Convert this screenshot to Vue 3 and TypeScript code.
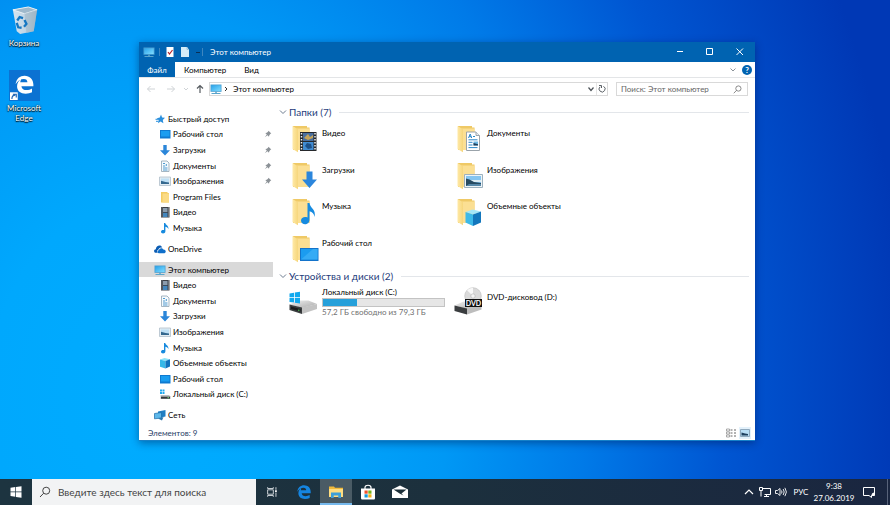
<script setup lang="ts">
import { ref } from 'vue'

interface NavItem {
  label: string
  icon: string
  child?: boolean
  pinned?: boolean
  selected?: boolean
  gapBefore?: boolean
}

interface Tile {
  label: string
  icon: string
}

const navItems: NavItem[] = [
  { label: 'Быстрый доступ', icon: 'star' },
  { label: 'Рабочий стол', icon: 'desktop', child: true, pinned: true },
  { label: 'Загрузки', icon: 'download', child: true, pinned: true },
  { label: 'Документы', icon: 'document', child: true, pinned: true },
  { label: 'Изображения', icon: 'picture', child: true, pinned: true },
  { label: 'Program Files', icon: 'folder', child: true },
  { label: 'Видео', icon: 'video', child: true },
  { label: 'Музыка', icon: 'music', child: true },
  { label: 'OneDrive', icon: 'cloud', gapBefore: true },
  { label: 'Этот компьютер', icon: 'computer', selected: true, gapBefore: true },
  { label: 'Видео', icon: 'video', child: true },
  { label: 'Документы', icon: 'document', child: true },
  { label: 'Загрузки', icon: 'download', child: true },
  { label: 'Изображения', icon: 'picture', child: true },
  { label: 'Музыка', icon: 'music', child: true },
  { label: 'Объемные объекты', icon: 'cube', child: true },
  { label: 'Рабочий стол', icon: 'desktop', child: true },
  { label: 'Локальный диск (C:)', icon: 'disk', child: true },
  { label: 'Сеть', icon: 'network', gapBefore: true },
]

const folders: Tile[] = [
  { label: 'Видео', icon: 'big-video' },
  { label: 'Документы', icon: 'big-document' },
  { label: 'Загрузки', icon: 'big-download' },
  { label: 'Изображения', icon: 'big-picture' },
  { label: 'Музыка', icon: 'big-music' },
  { label: 'Объемные объекты', icon: 'big-cube' },
  { label: 'Рабочий стол', icon: 'big-desktop' },
]

const totalGb = 79.3
const freeGb = 57.2
const usedPercent = ((totalGb - freeGb) / totalGb) * 100

const query = ref('')
const taskQuery = ref('')
</script>

<template>
  <div class="screen">
    <svg class="sprite" aria-hidden="true">
      <defs>
        <linearGradient id="g-screen" x1="0" y1="0" x2="1" y2="1">
          <stop offset="0" stop-color="#2aa3ea" />
          <stop offset="1" stop-color="#7fdcff" />
        </linearGradient>
        <linearGradient id="g-folder" x1="0" y1="0" x2="1" y2="0">
          <stop offset="0" stop-color="#ffe9a6" />
          <stop offset="1" stop-color="#f6d67c" />
        </linearGradient>
        <linearGradient id="g-bin" x1="0" y1="0" x2="1" y2="0">
          <stop offset="0" stop-color="#d5e3ee" />
          <stop offset="0.5" stop-color="#c1d6e6" />
          <stop offset="1" stop-color="#8fa9bd" />
        </linearGradient>
        <linearGradient id="g-disk" x1="0" y1="0" x2="1" y2="1">
          <stop offset="0" stop-color="#f0f0f0" />
          <stop offset="1" stop-color="#a9a9a9" />
        </linearGradient>
      </defs>

      <symbol id="star" viewBox="0 0 12 12">
        <path d="M7 1.500 8.100 4.500 11 4.800 8.800 6.900 9.400 10.200 6.600 8.500 4 10.200 4.700 7.100 2.800 5.200 5.800 4.500Z" fill="#2a8fdd" />
        <path d="M1.500 6.300h3M2 8.300h2.500" stroke="#2a8fdd" />
      </symbol>
      <symbol id="desktop" viewBox="0 0 12 12">
        <path d="M1 2h10.500v8.500H1z" fill="#0f7ad0" />
        <path d="M2 3h8.500v5.500H2z" fill="#1a9df0" />
      </symbol>
      <symbol id="download" viewBox="0 0 12 12">
        <path d="M4.300 1h3.400v5.200H11L6 11.500 1 6.200h3.300z" fill="#2b86d9" />
      </symbol>
      <symbol id="document" viewBox="0 0 12 12">
        <path d="M2.500 1h5.500L10 3v8.500H2.500z" fill="#f6fafd" stroke="#8fa3b3" stroke-width=".8" />
        <path d="M4 3.500h2M7.300 4v2M4 6h2.200M4 8h4.500M4 10h4.500" stroke="#3a8fca" stroke-width=".9" />
      </symbol>
      <symbol id="picture" viewBox="0 0 12 12">
        <path d="M.5 2h11v8.500H.5z" fill="#e4edf3" stroke="#a8b8c4" stroke-width=".7" />
        <path d="M2 3.500h8V9H2z" fill="#bfe0f5" />
        <path d="M2 5.800 6.500 7 10 7.500V9H2z" fill="#35688e" />
      </symbol>
      <symbol id="folder" viewBox="0 0 12 12">
        <path d="M2 1h6.500v1H10v9.500H2z" fill="#f3cc62" />
        <path d="M3.500 2.500H10v9H3.500z" fill="#fbdb85" />
      </symbol>
      <symbol id="video" viewBox="0 0 12 12">
        <path d="M2 1h8.500v10.500H2z" fill="#3b3f46" />
        <path d="M4 2h4.500v4H4z" fill="#8b9cad" />
        <path d="M4 6.800h4.500V11H4z" fill="#4386bd" />
        <path d="M3 1.500v10M9.500 1.500v10" stroke="#c9ced4" stroke-width=".7" stroke-dasharray="1 1" />
      </symbol>
      <symbol id="music" viewBox="0 0 12 12">
        <path d="M5 1h1.300c.2 2 3.700 2.500 3 6.200-.5-1.700-1.500-2-2.900-2.400v4.500c0 2.800-4.400 2.900-4.400.5 0-1.700 1.700-2.200 3-1.700z" fill="#178ade" />
      </symbol>
      <symbol id="cloud" viewBox="0 0 12 12">
        <path d="M1 9.800C-.6 8.600.1 6.300 1.800 6.300 1.800 2.500 7 .8 8.200 4.500 5.800 4 4.600 5.200 4.400 6.700 2.800 7 2.800 9 3.800 9.800z" fill="#0b5cb3" />
        <path d="M4.800 10.200C3 9.700 3.200 7.300 5 7.300c.2-2.500 3.500-2.800 4.300-.7 2.600-.3 3.300 3 1.200 3.600z" fill="#0f6fca" />
      </symbol>
      <symbol id="computer" viewBox="0 0 12 12">
        <path d="M.5 1.500h11v7.300H.5z" fill="#4a9fd0" />
        <path d="M1.300 2.300h9.400V8H1.300z" fill="url(#g-screen)" />
        <path d="M5 8.800h2v1H5zM1.500 10h9v1h-9z" fill="#5aa5cc" />
      </symbol>
      <symbol id="cube" viewBox="0 0 12 12">
        <path d="M1 2.500 5.500 1 11 2.300 6.500 4z" fill="#8de3f8" />
        <path d="M1 2.500 6.500 4v7.500L1 9.800z" fill="#35b8e8" />
        <path d="M6.500 4 11 2.300v7.200l-4.500 2z" fill="#1173bd" />
      </symbol>
      <symbol id="disk" viewBox="0 0 12 12">
        <path d="M1 1.500h2v2H1zM3.500 1.500h2v2h-2zM1 4h2v2H1zM3.500 4h2v2h-2z" fill="#23aaf0" />
        <path d="M1.500 7h8.500l1.500 1.500v2.500h-10z" fill="#b9bdc0" />
        <path d="M2 8.700h9v2H2z" fill="#33383b" />
        <path d="M8.500 9.700h1.500" stroke="#7be07b" />
      </symbol>
      <symbol id="network" viewBox="0 0 12 12">
        <path d="M4 2.500 11.500 1v6.500L4 9z" fill="#1f7fc4" />
        <path d="M.5 4.500 7.500 3.500v5.500L.5 9.800z" fill="#5db8ea" stroke="#1a6aa8" stroke-width=".7" />
        <path d="M4 9.500 9.500 8 8 11.500z" fill="#2a79b0" />
      </symbol>
      <symbol id="pin" viewBox="0 0 8 8">
        <path d="M4.500.7 7.300 3.500 6.500 3.800 5.300 5.200 5 6.700 3.500 5.200.8 7.300 2.800 4.500 1.300 3l1.600-.3 1.300-1.200z" fill="#8b9196" />
      </symbol>

      <symbol id="base" viewBox="0 0 28 28">
        <path d="M2 1h14v1.500h2.500V25H2z" fill="#efc966" />
        <path d="M5.500 3.500h13V25h-13z" fill="#fbdf93" />
        <path d="M1.500 1 7 4.200v23L1.500 24z" fill="url(#g-folder)" />
      </symbol>
      <symbol id="big-video" viewBox="0 0 28 28">
        <use href="#base" width="28" height="28" />
        <path d="M9 7h16.500v19H9z" fill="#26282b" />
        <path d="M12 8h10.500v8H12z" fill="#496f9f" />
        <path d="M12 17h10.500v8H12z" fill="#408bd1" />
        <path d="M13 13l4-4 2 3 3-2v3l-5 2z" fill="#c4a35a" />
        <path d="M14 21l2-3 4 1 1 4-4 1z" fill="#1d5087" />
        <path d="M10.500 8v18M24 8v18" stroke="#f1f1f1" stroke-width="1.500" stroke-dasharray="1.500 1.500" />
      </symbol>
      <symbol id="big-document" viewBox="0 0 28 28">
        <use href="#base" width="28" height="28" />
        <path d="M10.500 7H20l3.500 3.500V25.500h-13z" fill="#fff" stroke="#9aa3aa" />
        <path d="M20 7v3.500h3.500" fill="#e6edf2" stroke="#9aa3aa" />
        <path d="m12.500 13 1.700-4 1.500 4m-2.500-1.300h2M17 11.500h2M12.500 14.800h9M12.500 17.300h4M12.500 20h4M12.500 22.600h9" fill="none" stroke="#2b87c8" />
        <path d="M17.500 16.500H22v4h-4.500z" fill="#6eb8e4" />
        <path d="m17.500 18 4.500 1.200v1.300h-4.500z" fill="#203e59" />
      </symbol>
      <symbol id="big-download" viewBox="0 0 28 28">
        <use href="#base" width="28" height="28" />
        <path d="M15.500 9.500h6v8H26L18.500 26 11 17.500h4.500z" fill="#2b86dc" />
      </symbol>
      <symbol id="big-picture" viewBox="0 0 28 28">
        <use href="#base" width="28" height="28" />
        <path d="M8.500 12.500h18v13h-18z" fill="#eef4f7" stroke="#9db1be" />
        <path d="M10 14h15v10H10z" fill="#85c5f0" />
        <path d="M10 18h15v2H10z" fill="#dcecf3" />
        <path d="m10 16.500 3.500 1L18 20l7 1v3H10z" fill="#274b62" />
        <path d="M13 22h12v2H10z" fill="#5687a8" />
      </symbol>
      <symbol id="big-music" viewBox="0 0 28 28">
        <use href="#base" width="28" height="28" />
        <path d="M16.500 5h2c.4 5 7 6.500 5 14-.5-3.500-2-5-5-5.800v8.500c0 6-8.500 5.600-8.500 1 0-3.200 3.500-4.500 6.500-3.200z" fill="#168be0" />
      </symbol>
      <symbol id="big-cube" viewBox="0 0 28 28">
        <use href="#base" width="28" height="28" />
        <path d="m9.500 14 7-2.500 8.500 2-8 3z" fill="#a5e6f7" />
        <path d="m9.500 14 7.500 2.500V28l-7.500-3.500z" fill="#3db9e8" />
        <path d="M17 16.500 25 13.500V24.500L17 28z" fill="#1377bd" />
      </symbol>
      <symbol id="big-desktop" viewBox="0 0 28 28">
        <use href="#base" width="28" height="28" />
        <path d="M9 13h18.500v13H9z" fill="#1373ca" />
        <path d="M10 14h16.500v10.500H10z" fill="#1b9cf0" />
        <path d="M10 24.500 22 14h4.500v10.500z" fill="#35abf5" />
      </symbol>

      <symbol id="edge" viewBox="0 0 24 24">
        <path d="M1 11.500C2 4.500 6.500 1 12 1c6.500 0 11 4.500 11 11v2H8.200c.3 3.200 3 4.800 6.300 4.800 2.500 0 4.800-.7 6.800-1.900v4.800C19.200 22.800 16.500 23.300 13.500 23.300 7 23.300 2.800 19.700 2.800 14c0-3.800 2-7 5.500-8.800-.9 1.100-1.400 2.500-1.600 4.100h8.900C15.600 6.600 14 5.200 11.200 5.200 7 5.200 3.500 7.500 1 11.500z" fill="currentColor" />
      </symbol>
      <symbol id="magnifier" viewBox="0 0 12 12">
        <circle cx="7.200" cy="4.700" r="3.500" fill="none" stroke="currentColor" />
        <path d="M4.700 7.200 1 11" fill="none" stroke="currentColor" />
      </symbol>
    </svg>

    <main class="desktop">
      <nav class="shortcuts" aria-label="Рабочий стол">
        <a class="shortcut" href="#bin">
          <svg class="shortcut-icon" viewBox="0 0 32 32">
            <path d="m4 5 16-3 9 3-3.500 22-14 3L8 27z" fill="url(#g-bin)" />
            <path d="m4 5 16-3 9 3-13 4z" fill="#9fb9cc" stroke="#e9f1f6" />
            <path d="m16 9 13-4-3.500 22-7.500 2z" fill="#a6bccb" opacity=".7" />
            <g fill="none" stroke="#1577c2" stroke-width="2.400">
              <path d="m8.500 16 2.500-3.500 3.500 1M16 15.500l2 4-2.500 3M13 23.500 9.500 23 8 18.500" />
            </g>
          </svg>
          <span>Корзина</span>
        </a>
        <a class="shortcut" href="#edge-browser">
          <svg class="shortcut-icon" viewBox="0 0 32 32">
            <path d="M0 0h32v32H0z" fill="#0b72d2" />
            <use href="#edge" x="6" y="5" width="20" height="20" color="#fff" />
            <path d="M1 23h8v8H1z" fill="#fff" />
            <path d="M3 30c0-3 1-4 3.500-4M4 25h3.500v3.500" fill="none" stroke="#2266b5" stroke-width="1.200" />
          </svg>
          <span>Microsoft Edge</span>
        </a>
      </nav>

      <section class="window" aria-label="Этот компьютер">
        <header class="titlebar">
          <svg class="icon title-icon"><use href="#computer" /></svg>
          <span class="divider"></span>
          <button class="quick" aria-label="Свойства">
            <svg viewBox="0 0 12 12"><path d="M2.500 1h7v10h-7z" fill="#fff" /><path d="m4 6 1.500 2L8.500 4" fill="none" stroke="#b4232b" stroke-width="1.200" /></svg>
          </button>
          <button class="quick" aria-label="Новая папка">
            <svg viewBox="0 0 12 12"><path d="M2 1h6l1.500 2H10v8H2z" fill="#d5ecf8" /><path d="M8 1v2.500h2" fill="none" stroke="#8ab6d3" stroke-width=".7" /></svg>
          </button>
          <button class="quick small" aria-label="Настройка панели">
            <svg viewBox="0 0 8 12"><path d="M2 6.500h4" stroke="#0b2f55" /></svg>
          </button>
          <span class="divider"></span>
          <h1 class="title">Этот компьютер</h1>
          <div class="caption-buttons">
            <button aria-label="Свернуть"><svg viewBox="0 0 12 12"><path d="M3 5.500h6" stroke="#fff" /></svg></button>
            <button aria-label="Развернуть"><svg viewBox="0 0 12 12"><path d="M2.500 2.500h6v6h-6z" fill="none" stroke="#fff" /></svg></button>
            <button aria-label="Закрыть"><svg viewBox="0 0 12 12"><path d="m2.500 2.500 6.500 6.500M9 2.500 2.500 9" stroke="#fff" /></svg></button>
          </div>
        </header>

        <div class="ribbon">
          <button class="tab file">Файл</button>
          <button class="tab">Компьютер</button>
          <button class="tab">Вид</button>
          <button class="ribbon-toggle" aria-label="Развернуть ленту">
            <svg viewBox="0 0 8 8"><path d="m1.500 2.500 2.500 2.500 2.500-2.500" fill="none" stroke="#8b9399" /></svg>
          </button>
          <button class="help" aria-label="Справка">?</button>
        </div>

        <div class="navbar">
          <div class="arrows">
            <button aria-label="Назад"><svg viewBox="0 0 10 10"><path d="M9 5H1.500M4.500 2l-3 3 3 3" fill="none" stroke="#cfd3d6" /></svg></button>
            <button aria-label="Вперёд"><svg viewBox="0 0 10 10"><path d="M1 5h7.500M5.500 2l3 3-3 3" fill="none" stroke="#cfd3d6" /></svg></button>
            <button class="narrow" aria-label="Журнал"><svg viewBox="0 0 10 10"><path d="m3 4 2 2 2-2" fill="none" stroke="#cfd3d6" /></svg></button>
            <button class="up" aria-label="Вверх"><svg viewBox="0 0 10 10"><path d="M5 9V1.500M2 4.500l3-3 3 3" fill="none" stroke="#565b60" stroke-width="1.200" /></svg></button>
          </div>
          <div class="address">
            <svg class="icon"><use href="#computer" /></svg>
            <svg class="crumb-arrow" viewBox="0 0 8 8"><path d="m3 2 2 2-2 2" fill="none" stroke="#333" /></svg>
            <a class="crumb" href="#computer">Этот компьютер</a>
            <button aria-label="Список адресов"><svg viewBox="0 0 10 10"><path d="m2.500 3.500 2.500 3 2.500-3" fill="none" stroke="#4c5257" stroke-width="1.200" /></svg></button>
            <button class="refresh" aria-label="Обновить"><svg viewBox="0 0 10 10"><path d="M6.500 2.300A3 3 0 1 1 3 2.800M2 1.500h2.500V4" fill="none" stroke="#5b6166" /></svg></button>
          </div>
          <label class="search">
            <input v-model="query" type="search" aria-label="Поиск" placeholder="Поиск: Этот компьютер" />
            <svg viewBox="0 0 12 12"><use href="#magnifier" /></svg>
          </label>
        </div>

        <div class="body">
          <nav class="sidebar" aria-label="Навигация">
            <template v-for="(item, i) in navItems" :key="i">
              <span v-if="item.gapBefore" class="nav-gap"></span>
              <a class="nav-item" :class="{ child: item.child, selected: item.selected }" href="#item">
                <svg class="icon"><use :href="'#' + item.icon" /></svg>
                <span>{{ item.label }}</span>
                <svg v-if="item.pinned" class="pin"><use href="#pin" /></svg>
              </a>
            </template>
          </nav>

          <div class="content">
            <h2 class="group">
              <svg viewBox="0 0 8 8"><path d="m1 2.500 3 3 3-3" fill="none" stroke="#6d7c90" /></svg>
              <span>Папки (7)</span>
            </h2>
            <div class="tiles folders">
              <a v-for="folder in folders" :key="folder.label" class="tile" href="#folder">
                <svg class="tile-icon"><use :href="'#' + folder.icon" /></svg>
                <span class="tile-name">{{ folder.label }}</span>
              </a>
            </div>
            <h2 class="group">
              <svg viewBox="0 0 8 8"><path d="m1 2.500 3 3 3-3" fill="none" stroke="#6d7c90" /></svg>
              <span>Устройства и диски (2)</span>
            </h2>
            <div class="tiles drives">
              <a class="tile drive" href="#disk-c">
                <svg class="tile-icon" viewBox="0 0 28 28">
                  <path d="m.5 17.500 9-4h10l8.500 3.500-15 4z" fill="url(#g-disk)" />
                  <path d="m.5 17.500 12.500 3v6.500L.5 23z" fill="#3a3d3f" />
                  <path d="m13 20.500 15-3.500v5L13 27z" fill="#c3c3c3" />
                  <path d="m2 19.500 9.500 2.500v2.500L2 22z" fill="#1b1c1d" />
                  <path d="M9 23.200h1.500" stroke="#5bd765" />
                  <path d="m.5 6.500 4.500-.8v4.600H.5zM5.800 5.600 11 4.800v5.500H5.800zM.5 11H5v4.600l-4.500-.7zM5.800 11H11v5.500l-5.200-.8z" fill="#11a9ee" />
                </svg>
                <span class="drive-info">
                  <span>Локальный диск (C:)</span>
                  <span class="meter"><span class="meter-fill" :style="{ width: usedPercent + '%' }"></span></span>
                  <span class="free">57,2 ГБ свободно из 79,3 ГБ</span>
                </span>
              </a>
              <a class="tile drive" href="#disk-d">
                <svg class="tile-icon" viewBox="0 0 28 28">
                  <path d="m.5 18.500 9-4h10l8 3.500-14.500 4z" fill="url(#g-disk)" />
                  <path d="m.5 18.500 12.500 3v6L.5 24z" fill="#3a3d3f" />
                  <path d="m13 21.500 14.500-3.500v4.500L13 27.500z" fill="#bdbdbd" />
                  <circle cx="19" cy="9" r="8.300" fill="#dadada" stroke="#bcbcbc" stroke-width=".6" />
                  <path d="M19 9 13 3.200A8.300 8.300 0 0 1 19 .7z" fill="#f8f8f8" />
                  <circle cx="19" cy="9" r="2.200" fill="#f4f4f4" stroke="#b0b0b0" stroke-width=".6" />
                  <path d="M11 12h17v8H11z" fill="#101010" />
                  <text class="disc-label" x="19.500" y="18.500" text-anchor="middle">DVD</text>
                </svg>
                <span class="tile-name">DVD-дисковод (D:)</span>
              </a>
            </div>
          </div>
        </div>

        <footer class="statusbar">
          <span>Элементов: 9</span>
          <div class="view-buttons">
            <button aria-label="Таблица"><svg viewBox="0 0 12 12"><path d="M1.500 2h3v2h-3zM1.500 5h3v2h-3zM1.500 8h3v2h-3z" fill="none" stroke="#888" stroke-width=".7" /><path d="M5.500 3h2M5.500 6h2M5.500 9h2M9 3h2M9 6h2M9 9h2" stroke="#666" /></svg></button>
            <button class="active" aria-label="Крупные значки"><svg viewBox="0 0 12 12"><path d="M1.500 2.500h9v7h-9z" fill="#b9def5" stroke="#8fa9bd" /><path d="m2.500 5.500 3.500 1 3 .5v1.500H2.500z" fill="#1e3f5d" /></svg></button>
          </div>
        </footer>
      </section>
    </main>

    <footer class="taskbar">
      <button class="task" aria-label="Пуск">
        <svg viewBox="0 0 16 16"><path d="m2.500 3.800 4.800-.7v4.500H2.500zM8 3l5.500-.8v5.400H8zM2.500 8.300h4.800v4.500l-4.800-.7zM8 8.300h5.500v5.500L8 13z" fill="#fff" /></svg>
      </button>
      <label class="task-search">
        <svg viewBox="0 0 12 12"><use href="#magnifier" /></svg>
        <input v-model="taskQuery" type="search" aria-label="Поиск в Windows" placeholder="Введите здесь текст для поиска" />
      </label>
      <button class="task" aria-label="Представление задач">
        <svg class="view-icon" viewBox="0 0 16 16"><path d="M3 5.500h6.500v5H3zM3 2.500v1.500h6.500V2.500M3 13.500V12h6.500v1.500M12.500 2.500v3M12.500 8.500v5" fill="none" stroke="#dfe4e7" /><path d="M11.500 6h2v2h-2z" fill="#fff" /></svg>
      </button>
      <button class="task edge-task" aria-label="Microsoft Edge">
        <svg viewBox="0 0 24 24"><use href="#edge" x="1" y="1" width="22" height="22" /></svg>
      </button>
      <button class="task running" aria-label="Проводник">
        <svg viewBox="0 0 16 16"><path d="M1 2.500h5l1 1.300h8V13H1z" fill="#f0b93b" /><path d="M1 5h14v8H1z" fill="#ffdd80" /><path d="M3 8.500h10V14h-2.700v-2.500H5.700V14H3z" fill="#3c9fd8" /></svg>
      </button>
      <button class="task" aria-label="Microsoft Store">
        <svg viewBox="0 0 16 16"><path d="M5 5V3.500c0-3 6-3 6 0V5" fill="none" stroke="#fff" stroke-width="1.200" /><path d="M1 4.500h14V14c0 1-.5 1.500-1.500 1.500h-11C1.500 15.500 1 15 1 14z" fill="#fff" /><path d="M4.500 6.500h3.200v3.200H4.500z" fill="#f0522b" /><path d="M8.300 6.500h3.200v3.200H8.300z" fill="#77b31b" /><path d="M4.500 10.300h3.200v3.200H4.500z" fill="#1399dd" /><path d="M8.300 10.300h3.200v3.200H8.300z" fill="#f3b01b" /></svg>
      </button>
      <button class="task" aria-label="Почта">
        <svg viewBox="0 0 16 16"><path d="M0 5.500 8 1.500l8 4V14H0z" fill="#fff" /><path d="M1.500 5.500h13L9.500 9.500l2 2L8 9.800z" fill="#1d303a" /></svg>
      </button>

      <div class="tray">
        <button class="tray-button" aria-label="Скрытые значки"><svg viewBox="0 0 12 12"><path d="m2 8 4-4 4 4" fill="none" stroke="#fff" stroke-width="1.200" /></svg></button>
        <button class="tray-button" aria-label="Сеть"><svg viewBox="0 0 12 12"><path d="M3.500 2.500h8v6h-6M7.500 8.500v2M5 10.500h5M.5 1.500h3v3h-3zM2 4.500v6" fill="none" stroke="#fff" /></svg></button>
        <button class="tray-button" aria-label="Громкость"><svg viewBox="0 0 12 12"><path d="M.5 4.500h2l2.500-2v7l-2.500-2h-2zM6.500 4.500q1 1.500 0 3M8.200 3q2 3 0 6M9.900 1.800q3 4.200 0 8.400" fill="none" stroke="#fff" stroke-width=".9" /></svg></button>
        <button class="language">РУС</button>
        <button class="clock"><span>9:38</span><span>27.06.2019</span></button>
        <button class="notify" aria-label="Уведомления"><svg viewBox="0 0 12 12"><path d="M.5 1.500h11v8h-3v2l-2.500-2H.5z" fill="none" stroke="#fff" /><path d="M8.500 9.500q0-3 3-3v3z" fill="#fff" /></svg></button>
        <button class="show-desktop" aria-label="Свернуть все окна"></button>
      </div>
    </footer>
  </div>
</template>

<style>
body {
  margin: 0;
}
</style>

<style scoped>
.screen {
  display: flex;
  flex-direction: column;
  height: 100vh;
  overflow: hidden;
  background: radial-gradient(ellipse 86% 190% at 16% 78%, #00acff 0%, #00a8fd 20%, #0098f5 40%, #007ae8 58%, #0056d2 76%, #0038b5 100%);
  color: #000;
  font: 8px/12px Lato, "Open Sans", "Noto Sans", sans-serif;
}

.sprite {
  position: absolute;
  width: 0;
  height: 0;
}

button {
  display: flex;
  align-items: center;
  justify-content: center;
  margin: 0;
  border: 0;
  padding: 0;
  background: none;
  color: inherit;
  font: inherit;
}

a {
  color: inherit;
  text-decoration: none;
}

input {
  flex: 1;
  min-width: 0;
  border: 0;
  padding: 0;
  outline: 0;
  background: none;
  color: inherit;
  font: inherit;
}

input::placeholder {
  color: inherit;
  opacity: 1;
}

svg {
  flex: none;
  width: 12px;
  height: 12px;
}

.desktop {
  position: relative;
  flex: 1;
  min-height: 0;
}

.shortcuts {
  display: flex;
  flex-direction: column;
  gap: 22px;
  width: 48px;
  padding-top: 5px;
}

.shortcut {
  display: flex;
  flex-direction: column;
  align-items: center;
  color: #fff;
  line-height: 10px;
  text-align: center;
  text-shadow: 0 1px 1px #000, 0 0 2px #000;
}

.shortcut-icon {
  width: 31px;
  height: 31px;
  margin-bottom: 2px;
}

.window {
  position: absolute;
  top: 42px;
  right: 135px;
  bottom: 38px;
  left: 139px;
  display: flex;
  flex-direction: column;
  border-bottom: 1px solid #1580c8;
  background: #fff;
  box-shadow: 0 2px 8px rgb(0 20 70 / 45%);
}

.titlebar {
  display: flex;
  flex: none;
  align-items: center;
  height: 20px;
  padding-left: 4px;
  background: #0063b1;
  color: #fff;
}

.title-icon {
  margin-right: 4px;
}

.divider {
  width: 1px;
  height: 8px;
  background: #3e86bf;
}

.quick {
  width: 12px;
  margin-left: 4px;
}

.quick + .quick {
  margin-left: 3px;
}

.quick.small,
.quick.small svg {
  width: 8px;
}

.title {
  flex: 1;
  margin: 0;
  padding-left: 7px;
  font: inherit;
}

.caption-buttons {
  display: flex;
}

.caption-buttons button {
  width: 30px;
  height: 20px;
}

.ribbon {
  display: flex;
  flex: none;
  align-items: stretch;
  height: 15px;
  padding-right: 3px;
  border-bottom: 1px solid #e3e5e7;
}

.tab {
  padding: 0 9px;
}

.tab.file {
  width: 36px;
  background: #0063b1;
  color: #fff;
}

.ribbon-toggle {
  width: 14px;
  margin-right: 2px;
  margin-left: auto;
}

.ribbon-toggle svg {
  width: 8px;
  height: 8px;
}

.help {
  align-self: center;
  width: 10px;
  height: 10px;
  border-radius: 50%;
  background: #0063b1;
  color: #fff;
  font-weight: 700;
  line-height: 10px;
}

.navbar {
  display: flex;
  flex: none;
  height: 14px;
  padding: 4px 7px 4px 2px;
}

.arrows {
  display: flex;
  flex: none;
  align-items: center;
}

.arrows button {
  width: 20px;
}

.arrows .narrow {
  width: 10px;
}

.arrows .up {
  width: 18px;
}

.arrows svg,
.address button svg {
  width: 10px;
  height: 10px;
}

.address,
.search {
  display: flex;
  align-items: center;
  box-sizing: border-box;
  border: 1px solid #d9d9d9;
}

.address {
  flex: 1;
  margin-right: 8px;
}

.crumb-arrow {
  width: 8px;
  height: 8px;
}

.crumb {
  flex: 1;
  padding-left: 3px;
}

.address button {
  width: 11px;
  height: 100%;
}

.address .refresh {
  border-left: 1px solid #e5e5e5;
}

.search {
  width: 132px;
  padding: 0 5px 0 4px;
  color: #666;
}

.search svg {
  width: 9px;
  height: 9px;
}

.body {
  display: flex;
  flex: 1;
  min-height: 0;
}

.sidebar {
  display: flex;
  flex: none;
  flex-direction: column;
  box-sizing: border-box;
  width: 134px;
  padding: 11px 0 3px;
}

.nav-item {
  display: flex;
  flex: 3;
  gap: 2px;
  align-items: center;
  min-height: 0;
  padding: 0 1px 0 15px;
}

.nav-item.child {
  padding-left: 20px;
}

.nav-item.selected {
  background: #d9d9d9;
}

.nav-gap {
  flex: 1;
}

.pin {
  width: 8px;
  height: 8px;
  margin-left: auto;
}

.content {
  flex: 1;
  min-width: 0;
  padding: 4px 6px 0 6px;
}

.group {
  display: flex;
  gap: 2px;
  align-items: center;
  height: 16px;
  margin: 0;
  color: #1e3c7b;
  font-size: 10px;
  font-weight: 400;
  line-height: 16px;
}

.group svg {
  width: 8px;
  height: 8px;
}

.group::after {
  flex: 1;
  height: 1px;
  margin-left: 6px;
  background: #e3e6ea;
  content: "";
}

.tiles {
  display: grid;
  grid-template-columns: 165px 165px;
  padding: 5px 0 0 12px;
}

.folders {
  box-sizing: border-box;
  grid-template-rows: 37px 36px 37px;
  height: 148px;
}

.tile {
  display: flex;
  gap: 3px;
}

.tile-icon {
  width: 28px;
  height: 28px;
}

.tile-name {
  padding-top: 2px;
}

.drives {
  padding: 3px 0 0 10px;
}

.tile.drive {
  gap: 5px;
}

.drive-info {
  display: flex;
  flex: 1;
  flex-direction: column;
  margin-right: 9px;
  line-height: 11px;
}

.meter {
  height: 7px;
  border: 1px solid #c3c3c3;
  background: #e6e6e6;
}

.meter-fill {
  display: block;
  height: 100%;
  background: #26a0da;
}

.free {
  color: #717171;
}

.drive .tile-name {
  padding-top: 4px;
}

.disc-label {
  fill: #fff;
  font-size: 7px;
  font-weight: 700;
}

.statusbar {
  display: flex;
  flex: none;
  align-items: center;
  justify-content: space-between;
  height: 14px;
  padding: 0 4px 0 9px;
  color: #1e3c66;
}

.view-buttons {
  display: flex;
  gap: 2px;
}

.view-buttons .active {
  background: #e3f1fb;
}

.taskbar {
  display: flex;
  flex: none;
  height: 26px;
  background: linear-gradient(90deg, #1d3440, #1c303d 50%, #1a2640);
  color: #fff;
}

.task {
  flex: none;
  width: 32px;
}

.task svg {
  width: 16px;
  height: 16px;
}

.task .view-icon {
  width: 14px;
  height: 14px;
}

.edge-task {
  color: #1585e0;
}

.task.running {
  background: #4a5b65;
  box-shadow: inset 0 -2px #76b9ed;
}

.task-search {
  display: flex;
  flex: 0 1 224px;
  gap: 7px;
  align-items: center;
  box-sizing: border-box;
  padding-left: 7px;
  background: #f2f3f4;
  color: #444;
  font-size: 10px;
}

.tray {
  display: flex;
  align-items: stretch;
  margin-left: auto;
}

.tray-button {
  width: 16px;
}

.language {
  width: 24px;
}

.clock {
  flex-direction: column;
  width: 42px;
}

.notify {
  width: 28px;
}

.show-desktop {
  width: 3px;
  margin-left: 4px;
  border-left: 1px solid #58637a;
}
</style>
